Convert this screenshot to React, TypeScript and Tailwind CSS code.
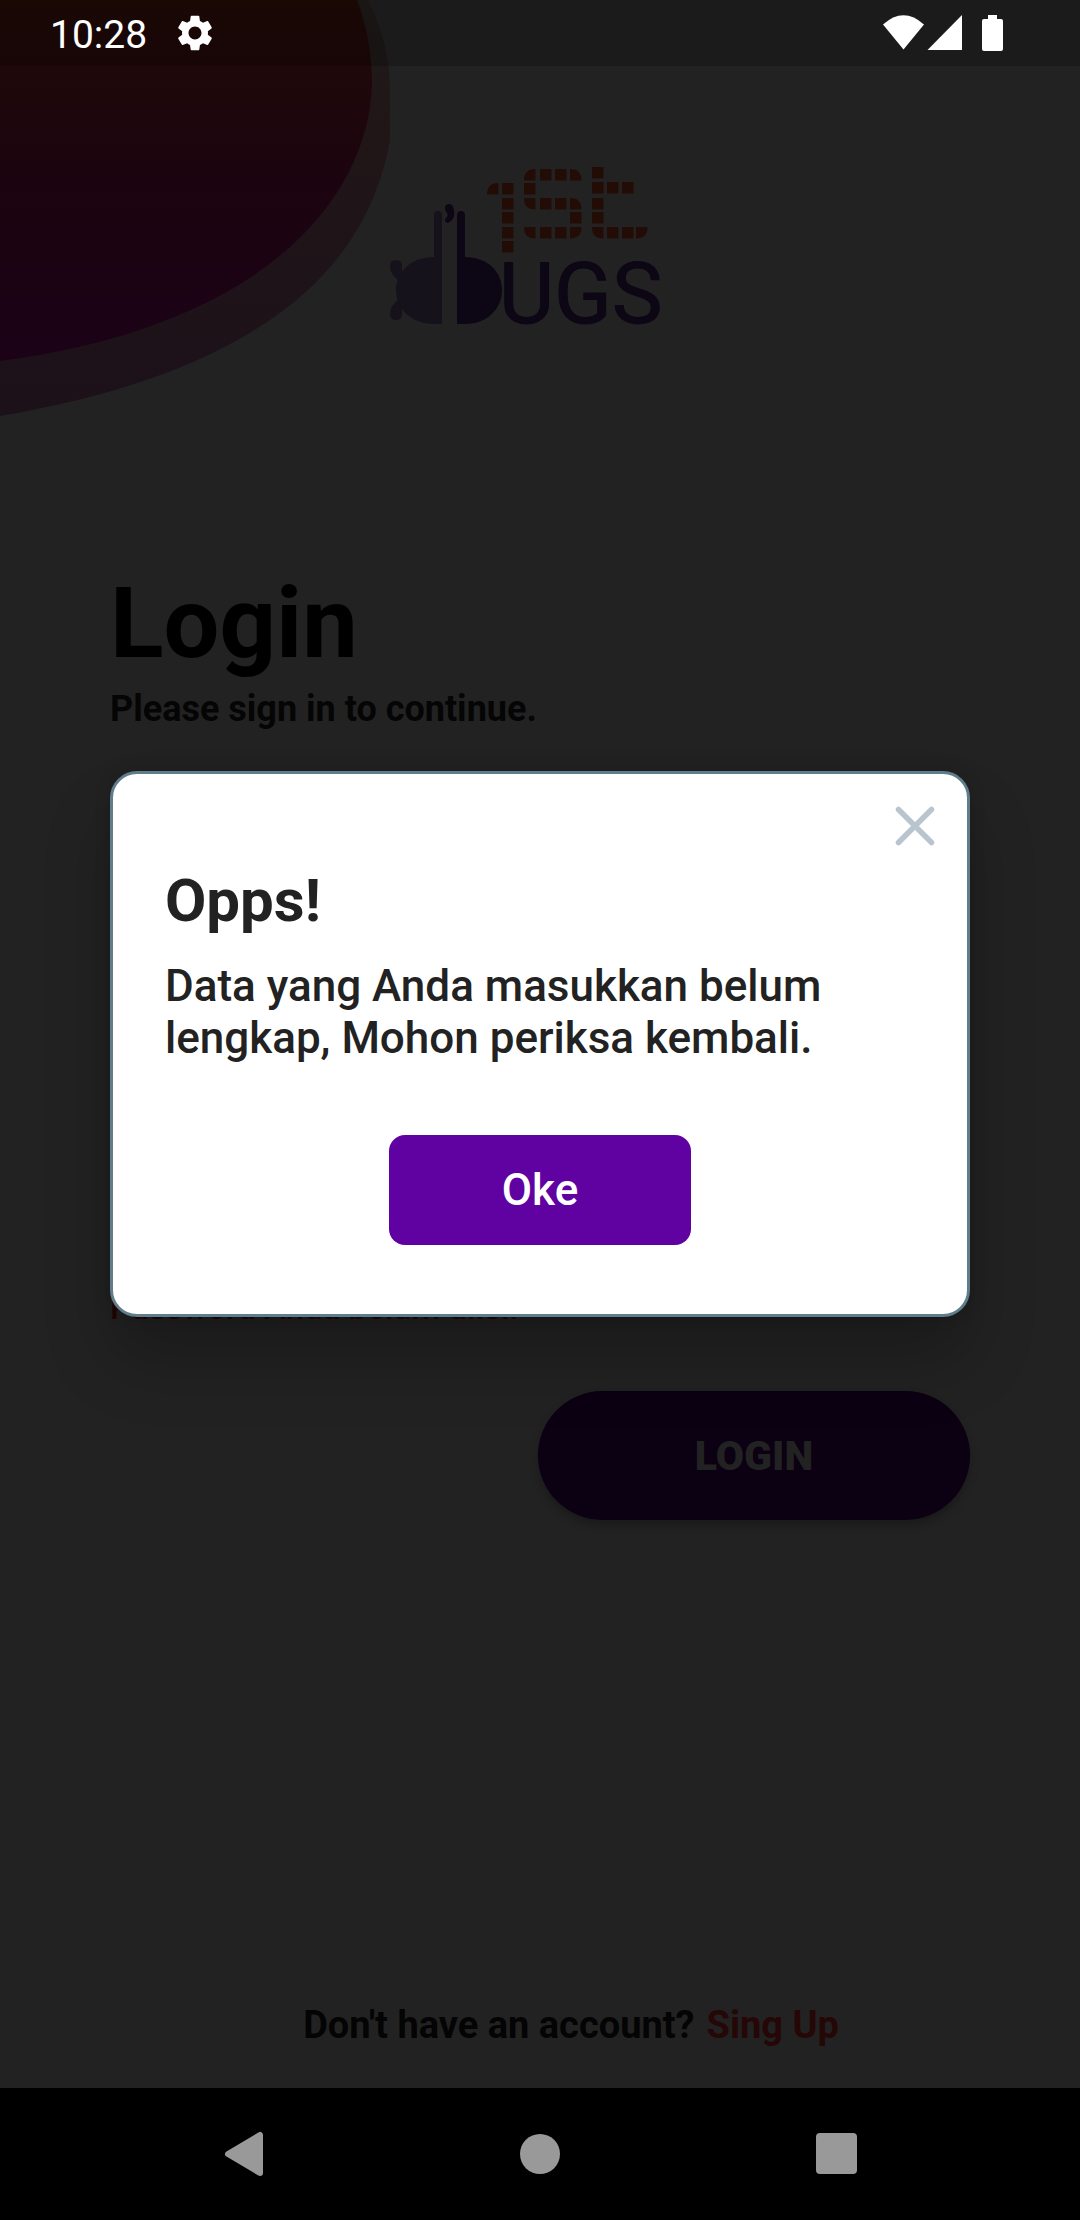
import React from "react";

const INK = "#0d0715";
const INK_SOFT = "#15121c";
const RUST = "#220c05";

// Cells of the pixel-style "1st" mark: column, row and optional rounded corner.
type Corner = "tl" | "tr" | "bl" | "br";
const cells: [number, number, Corner?][] = [
  [97, 16, "tl"], [112, 16], [112, 31], [112, 45], [112, 60], [112, 74],
  [134, 2, "tl"], [150, 2], [165, 2], [180, 2, "tr"],
  [134, 16], [134, 31, "bl"], [150, 31], [165, 31], [180, 31, "tr"], [180, 45],
  [134, 60, "bl"], [150, 60], [165, 60], [180, 60, "br"],
  [202, 0], [202, 15], [217, 15], [232, 15], [202, 31], [202, 45],
  [202, 60, "bl"], [217, 60], [232, 60], [246, 60, "br"],
];

const shapes: Record<Corner | "sq", string> = {
  sq: "M0 0h11.500v11.500h-11.500z",
  tl: "M11.500 0v11.500h-11.500q0-11.500 11.500-11.500z",
  tr: "M0 0q11.500 0 11.500 11.500h-11.500z",
  bl: "M0 0h11.500v11.500q-11.500 0-11.500-11.500z",
  br: "M0 0h11.500q0 11.500-11.500 11.500z",
};

function Blob() {
  return (
    <svg viewBox="0 0 390 418" className="w-[390px] h-[418px] shrink-0" aria-hidden="true">
      <defs>
        <linearGradient id="inner" x1="0" y1="0" x2="0" y2="1">
          <stop offset="0" stopColor="#200a06" />
          <stop offset="0.2" stopColor="#1f080a" />
          <stop offset="0.5" stopColor="#1c040f" />
          <stop offset="1" stopColor="#1b0217" />
        </linearGradient>
        <linearGradient id="outer" x1="0" y1="0" x2="0" y2="1">
          <stop offset="0" stopColor="#201c1a" />
          <stop offset="0.35" stopColor="#201517" />
          <stop offset="1" stopColor="#1c1119" />
        </linearGradient>
      </defs>
      <path
        d="M0 0H368C382 28 390 58 390 90V140C372 240 300 365 0 416Z"
        fill="url(#outer)"
      />
      <path
        d="M0 0H357C367 26 372 54 372 85C368 195 270 325 0 361Z"
        fill="url(#inner)"
      />
    </svg>
  );
}

function Logo() {
  return (
    <svg viewBox="0 0 280 190" className="w-[280px] h-[190px] shrink-0" role="img" aria-label="1st Bugs">
      <g fill={RUST}>
        {cells.map(([x, y, corner]) => (
          <path key={`${x}-${y}`} d={shapes[corner ?? "sq"]} transform={`translate(${x} ${y})`} />
        ))}
      </g>
      <g fill={INK_SOFT}>
        <path d="M44 48q0-4 4-4t4 4V157H44C22 157 6 142 6 123S22 90 44 90Z" />
        <path d="M0 99q0-6 6-6t6 6v6q-2 4-4 8Q0 107 0 99ZM0 147q0 6 6 6t6-6v-6q-2-4-4-8Q0 139 0 147Z" />
      </g>
      <g fill={INK}>
        <path d="M67 48q0-4 4-4t4 4V90C98 90 112 105 112 123S98 157 75 157H67Z" />
        <path d="M55 41q0-4 4-4t5 6q2 9-6 13q-3 0-3-4q4-3 2-6q-2-2-2-5Z" />
      </g>
      <text
        x="109"
        y="156"
        fontFamily="Roboto, sans-serif"
        fontSize="85"
        fontWeight="400"
        fill={INK}
        stroke={INK}
        strokeWidth="1"
        strokeLinejoin="round"
      >
        UGS
      </text>
    </svg>
  );
}

function StatusBar() {
  return (
    <header className="absolute inset-x-0 top-0 z-20 flex h-[66px] items-center justify-between bg-black/20 pl-[50px] pr-[76px] text-white">
      <div className="flex items-center gap-[30px]">
        <time className="pt-[3px] text-[39px] leading-[46px]">10:28</time>
        <svg viewBox="2 2 20 20" className="size-[36px]" fill="currentColor" aria-hidden="true">
          <path d="M19.14 12.94c.04-.3.06-.61.06-.94 0-.32-.02-.64-.07-.94l2.03-1.58c.18-.14.23-.41.12-.61l-1.92-3.32c-.12-.22-.37-.29-.59-.22l-2.39.96c-.5-.38-1.03-.7-1.62-.94l-.36-2.54c-.04-.24-.24-.41-.48-.41h-3.84c-.24 0-.43.17-.47.41l-.36 2.54c-.59.24-1.13.57-1.62.94l-2.39-.96c-.22-.08-.47 0-.59.22L2.74 8.87c-.12.21-.08.47.12.61l2.03 1.58c-.05.3-.09.63-.09.94s.02.64.07.94l-2.03 1.58c-.18.14-.23.41-.12.61l1.92 3.32c.12.22.37.29.59.22l2.39-.96c.5.38 1.03.7 1.62.94l.36 2.54c.05.24.24.41.48.41h3.84c.24 0 .44-.17.47-.41l.36-2.54c.59-.24 1.13-.56 1.62-.94l2.39.96c.22.08.47 0 .59-.22l1.92-3.32c.12-.22.07-.47-.12-.61l-2.01-1.58zM12 15.6c-1.98 0-3.6-1.62-3.6-3.6s1.62-3.6 3.6-3.6 3.6 1.62 3.6 3.6-1.62 3.6-3.6 3.6z" />
        </svg>
      </div>
      <svg viewBox="0 0 121 36" className="h-[36px] w-[121px]" fill="currentColor" aria-hidden="true">
        <path d="M0 9.500Q20.500-9 41 9.500L20.500 34.500Z" />
        <path d="M79 0V35H44.500Z" />
        <path d="M105 0h9v4h4q2 0 2 2V34q0 2-2 2H101q-2 0-2-2V6q0-2 2-2h4Z" />
      </svg>
    </header>
  );
}

function Dialog() {
  return (
    <div className="absolute inset-0 z-10 flex items-center justify-center px-[110px]">
      <section
        role="dialog"
        aria-modal="true"
        aria-labelledby="dialog-title"
        className="relative w-full rounded-[27px] border-3 border-[#607d8b] bg-white px-[52px] pt-[92px] pb-[69px] text-[#222222] shadow-[0_44px_66px_rgba(0,0,0,0.22),0_0_16px_rgba(0,0,0,0.15)]"
      >
        <button type="button" aria-label="Close" className="absolute right-[32px] top-[32px]">
          <svg viewBox="0 0 40 40" className="size-[40px]" stroke="#b8c4ce" strokeWidth="5.500" strokeLinecap="round">
            <path d="M3.500 3.500L36.500 36.500M36.500 3.500L3.500 36.500" />
          </svg>
        </button>
        <h2 id="dialog-title" className="text-[60px] leading-[70px] font-bold">
          Opps!
        </h2>
        <p className="mt-6 text-[44px] leading-[52px] font-medium">
          Data yang Anda masukkan belum lengkap, Mohon periksa kembali.
        </p>
        <button
          type="button"
          className="mx-auto mt-[71px] block h-[110px] w-[302px] rounded-2xl bg-[#6002a2] text-[44px] leading-[52px] font-medium text-white"
        >
          Oke
        </button>
      </section>
    </div>
  );
}

function NavBar() {
  return (
    <nav className="flex h-[132px] items-center bg-black px-24 pb-px text-[#999999]">
      <button type="button" aria-label="Back" className="flex flex-1 justify-center">
        <svg viewBox="0 0 40 46" className="h-[46px] w-[40px]" fill="currentColor" stroke="currentColor" strokeWidth="6" strokeLinejoin="round">
          <path d="M4 23L36 4V42Z" />
        </svg>
      </button>
      <button type="button" aria-label="Home" className="flex flex-1 justify-center">
        <span className="size-[40px] rounded-full bg-current" />
      </button>
      <button type="button" aria-label="Recent apps" className="flex flex-1 justify-center">
        <span className="size-[41px] rounded-[4px] bg-current" />
      </button>
    </nav>
  );
}

export default function App() {
  return (
    <div className="flex min-h-screen flex-col bg-[#222222] font-['Roboto',sans-serif]">
      <div className="relative flex flex-1 flex-col">
        <StatusBar />
        <div className="flex">
          <Blob />
          <div className="pt-[167px]">
            <Logo />
          </div>
        </div>
        <main className="flex flex-1 flex-col px-[110px] pt-[147px]">
          <h1 className="text-[99px] leading-[116px] font-bold text-black">Login</h1>
          <p className="mt-[7px] text-[36px] leading-[42px] font-bold text-[#050505]">
            Please sign in to continue.
          </p>
          <p className="mt-[557px] text-[33px] leading-[42px] font-medium text-[#220404]">
            Password Anda belum diisi!
          </p>
          <button
            type="button"
            className="mt-[62px] h-[129px] w-[432px] self-end rounded-full bg-[#0c0013] text-[41px] leading-[48px] font-black text-[#222222] shadow-[0_5px_9px_rgba(0,0,0,0.25)]"
          >
            LOGIN
          </button>
          <p className="mt-auto flex justify-center gap-3 pb-[40px] pl-[62px] text-[38px] leading-[46px] font-bold text-[#040404]">
            <span>Don't have an account?</span>
            <a href="#signup" className="text-[#240706]">
              Sing Up
            </a>
          </p>
        </main>
        <Dialog />
      </div>
      <NavBar />
    </div>
  );
}
